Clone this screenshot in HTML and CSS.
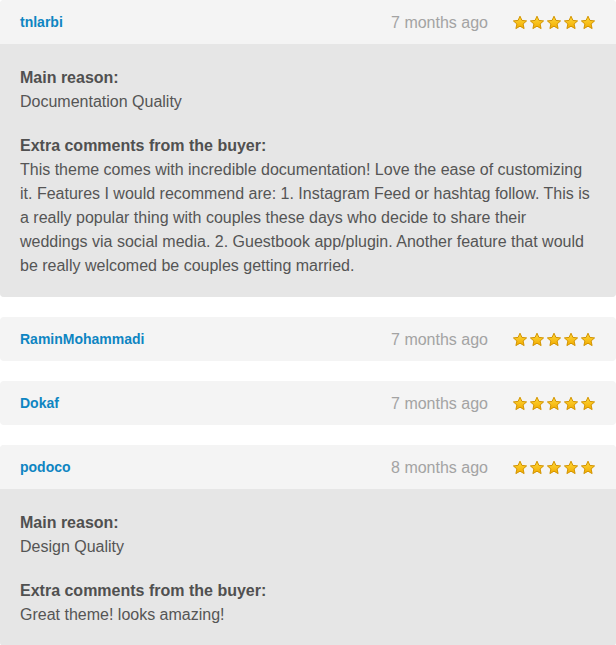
FILE: index.html
```html
<!DOCTYPE html>
<html>
<head>
<meta charset="utf-8">
<link rel="stylesheet" href="styles.css">
</head>
<body>
<svg width="0" height="0" class="defs">
  <defs>
    <linearGradient id="sg" x1="0" y1="0" x2="0" y2="1">
      <stop offset="0" stop-color="#ffd93a"/>
      <stop offset="1" stop-color="#f2ab00"/>
    </linearGradient>
    <symbol id="star" viewBox="0 0 16 16">
      <path d="M8 1.2 L9.9 5.4 L14.6 5.9 L11.1 9 L12.1 13.6 L8 11.2 L3.9 13.6 L4.9 9 L1.4 5.9 L6.1 5.4 Z" fill="url(#sg)" stroke="#d39400" stroke-width="1" stroke-linejoin="round"/>
    </symbol>
  </defs>
</svg>
<div class="list">
  <div class="card">
    <div class="head">
      <a class="user">tnlarbi</a>
      <span class="time">7 months ago</span>
      <span class="stars"><svg><use href="#star"/></svg><svg><use href="#star"/></svg><svg><use href="#star"/></svg><svg><use href="#star"/></svg><svg><use href="#star"/></svg></span>
    </div>
    <div class="body">
      <h4>Main reason:</h4>
      <p>Documentation Quality</p>
      <h4 class="gap">Extra comments from the buyer:</h4>
      <p>This theme comes with incredible documentation! Love the ease of customizing it. Features I would recommend are: 1. Instagram Feed or hashtag follow. This is a really popular thing with couples these days who decide to share their weddings via social media. 2. Guestbook app/plugin. Another feature that would be really welcomed be couples getting married.</p>
    </div>
  </div>
  <div class="card">
    <div class="head">
      <a class="user">RaminMohammadi</a>
      <span class="time">7 months ago</span>
      <span class="stars"><svg><use href="#star"/></svg><svg><use href="#star"/></svg><svg><use href="#star"/></svg><svg><use href="#star"/></svg><svg><use href="#star"/></svg></span>
    </div>
  </div>
  <div class="card">
    <div class="head">
      <a class="user">Dokaf</a>
      <span class="time">7 months ago</span>
      <span class="stars"><svg><use href="#star"/></svg><svg><use href="#star"/></svg><svg><use href="#star"/></svg><svg><use href="#star"/></svg><svg><use href="#star"/></svg></span>
    </div>
  </div>
  <div class="card">
    <div class="head">
      <a class="user">podoco</a>
      <span class="time">8 months ago</span>
      <span class="stars"><svg><use href="#star"/></svg><svg><use href="#star"/></svg><svg><use href="#star"/></svg><svg><use href="#star"/></svg><svg><use href="#star"/></svg></span>
    </div>
    <div class="body">
      <h4>Main reason:</h4>
      <p>Design Quality</p>
      <h4 class="gap">Extra comments from the buyer:</h4>
      <p>Great theme! looks amazing!</p>
    </div>
  </div>
</div>
</body>
</html>
```
FILE: styles.css
```css
html, body {
  margin: 0;
  padding: 0;
  background: #ffffff;
}
body {
  font-family: "Liberation Sans", Arial, Helvetica, sans-serif;
  color: #555555;
}
.defs {
  position: absolute;
  width: 0;
  height: 0;
}
.list {
  display: flex;
  flex-direction: column;
  gap: 20px;
  width: 616px;
}
.card {
  border-radius: 4px;
  overflow: hidden;
  background: #f4f4f4;
}
.head {
  display: flex;
  align-items: center;
  height: 44px;
  padding: 0 20px;
  background: #f4f4f4;
}
.user {
  font-size: 14px;
  font-weight: bold;
  color: #0e85c2;
  flex: 1;
}
.time {
  font-size: 16px;
  color: #a3a3a3;
  margin-right: 24px;
  padding-top: 2px;
}
.stars {
  display: flex;
  gap: 1px;
  padding-top: 1px;
}
.stars svg {
  width: 16px;
  height: 16px;
}
.body {
  background: #e6e6e6;
  padding: 22px 20px 19px;
  font-size: 16px;
  line-height: 24px;
}
.body h4 {
  margin: 0;
  font-size: 16px;
  font-weight: bold;
  color: #505050;
}
.body h4.gap {
  margin-top: 20px;
}
.body p {
  margin: 0;
}
```
